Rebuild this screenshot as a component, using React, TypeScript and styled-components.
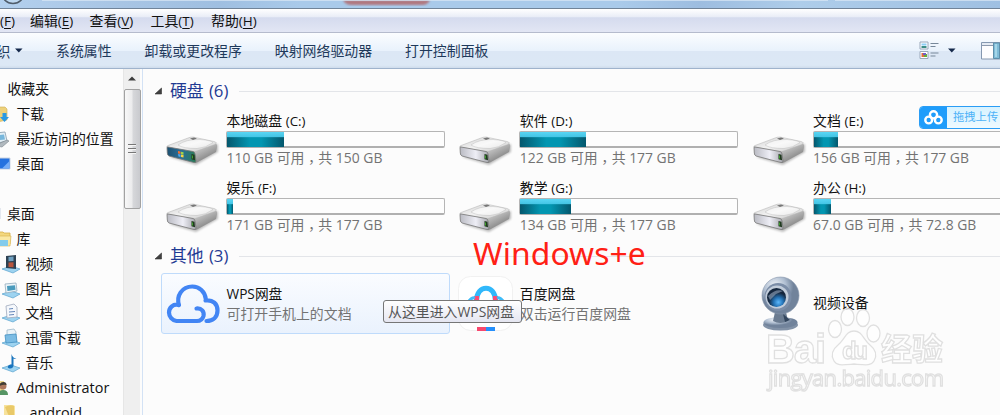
import React from "react";
import styled, { createGlobalStyle } from "styled-components";

const GlobalStyle = createGlobalStyle`
  * { box-sizing: border-box; }
  html, body { margin: 0; padding: 0; overflow: hidden; background: #fcfcfc; }
  body { font-family: "Open Sans", "Noto Sans CJK SC", sans-serif; font-size: 13.9px; color: #111; }
  svg { display: block; flex: none; overflow: visible; }
`;

const Window = styled.div`
  width: 1000px;
  height: 415px;
  display: flex;
  flex-direction: column;
  overflow: hidden;
  position: relative;
  background: #fcfcfc;
`;

const TitleStrip = styled.div`
  height: 9px;
  flex: none;
  overflow: hidden;
  background: linear-gradient(90deg, #b3d0ee 0, #a8c5e4 12%, #9fbfe1 22%, #a9caea 30%, #a9caea 62%, #9dbde0 70%, #aecdea 80%, #9fc0e2 100%);
  border-bottom: 1px solid #718499;
`;

const MenuBar = styled.div`
  height: 24px;
  flex: none;
  display: flex;
  align-items: center;
  gap: 15.5px;
  line-height: 20px;
  padding-top: 1px;
  white-space: nowrap;
  background: linear-gradient(#ffffff 0, #e9edf7 34%, #d5dbee 38%, #e2e6f4 100%);
  border-bottom: 1px solid #b5bbcd;
`;

const MenuItem = styled.span<{ $w: number }>`
  width: ${(p) => p.$w}px;
  u { text-underline-offset: 1.5px; text-decoration-thickness: 1px; }
`;

const Latin = styled.span<{ $size?: number }>`
  font-size: ${(p) => p.$size ?? 13}px;
`;

const Toolbar = styled.div`
  height: 36px;
  flex: none;
  display: flex;
  align-items: center;
  white-space: nowrap;
  color: #1e395b;
  background: linear-gradient(#fbfdff 0, #e9f2fc 50%, #dce7f5 52%, #dce8f5 92%, #cfdceb 100%);
  border-bottom: 1px solid #9fb3cc;
`;

const Organize = styled.div`
  display: flex;
  align-items: center;
  gap: 5px;
  width: 56px;
  margin-left: -3.5px;
`;

const ToolButton = styled.span`
  margin-right: 33px;
  line-height: 20px;
  &:first-of-type { margin-left: 3.5px; }
`;

const ToolIcons = styled.div`
  margin-left: auto;
  margin-right: -1px;
  display: flex;
  align-items: center;
  gap: 9px;
`;

const ToolGap = styled.i`
  width: 7px;
`;

const Content = styled.div`
  flex: 1;
  min-height: 0;
  display: flex;
`;

const Sidebar = styled.div`
  width: 123px;
  flex: none;
  padding-top: 8px;
  overflow: hidden;
`;

const SideRow = styled.div<{ $x: number; $gap?: number }>`
  height: 24.9px;
  display: flex;
  align-items: center;
  gap: ${(p) => p.$gap ?? 5}px;
  margin-left: ${(p) => p.$x - 0.6}px;
  white-space: nowrap;
  line-height: 20px;
`;

const Scrollbar = styled.div`
  width: 17px;
  flex: none;
  background: #efefef;
  border-left: 1px solid #e6e6e6;
  display: flex;
  flex-direction: column;
  align-items: center;
  padding-top: 7px;
`;

const Thumb = styled.div`
  width: 17px;
  height: 120px;
  margin-top: 8px;
  border: 1px solid #a2a2a2;
  border-radius: 2px;
  background: linear-gradient(90deg, #f8f8f8, #ececed 45%, #d6d7da 55%, #c9cace);
  display: flex;
  flex-direction: column;
  align-items: center;
  justify-content: center;
  gap: 2px;
`;

const Grip = styled.i`
  width: 8px;
  height: 2px;
  background: #777;
  border-bottom: 1px solid #f6f6f6;
`;

const Main = styled.div`
  flex: 1;
  min-width: 0;
  margin-left: 2px;
  border-left: 1px solid #d3e2f5;
  padding: 8px 0 0 11px;
`;

const GroupHeader = styled.div`
  height: 28px;
  display: flex;
  align-items: center;
  color: #1f3a93;
  font-size: 16.8px;
  line-height: 28px;
  white-space: nowrap;
`;

const GroupTitle = styled.span`
  width: 69px;
  margin-left: 7px;
  word-spacing: 1px;
`;

const Rule = styled.i`
  flex: 1;
  height: 1px;
  background: #e3e5e9;
`;

const DriveGrid = styled.div`
  display: grid;
  grid-template-columns: repeat(3, 293.3px);
  grid-auto-rows: 67.4px;
  height: 137px;
  padding: 5px 0 0 7px;
`;

const OtherGrid = styled(DriveGrid)`
  grid-auto-rows: 61px;
  height: auto;
  padding-top: 3px;
`;

const DriveTile = styled.div`
  display: flex;
  padding-left: 3px;
`;

const IconCell = styled.div<{ $top: number; $left?: number }>`
  width: 62px;
  flex: none;
  padding-top: ${(p) => p.$top}px;
  padding-left: ${(p) => p.$left ?? 0}px;
`;

const Name = styled.div`
  height: 21px;
  line-height: 21px;
  white-space: nowrap;
  padding-left: 0.5px;
`;

const Detail = styled(Name)`
  height: 20px;
  line-height: 20px;
  color: #737373;
`;

const Comma = styled.span`
  font-family: "Noto Sans CJK TC", sans-serif;
  line-height: 0;
  vertical-align: -4px;
`;

const Bar = styled.div`
  width: 219px;
  height: 17px;
  border: 1px solid #b5b5b5;
  border-bottom: 2px solid #b0b0b0;
  border-radius: 2px;
  background: #fdfdfd;
`;

const Fill = styled.div`
  height: 15px;
  background:
    linear-gradient(rgba(93, 218, 249, 0.95) 0, rgba(73, 202, 234, 0.95) 30%, rgba(0, 150, 180, 0) 38%),
    linear-gradient(90deg, #04576d, #0296b1 40%, #0296b1 60%, #04576d);
`;

const Tile = styled.div<{ $selected?: boolean }>`
  display: flex;
  width: 289px;
  height: 61px;
  padding-left: 2px;
  border: 1px solid ${(p) => (p.$selected ? "#bfdbfb" : "transparent")};
  border-radius: 3px;
  background: ${(p) => (p.$selected ? "linear-gradient(#fafcff, #eaf2fd)" : "none")};
`;

const TileText = styled.div<{ $top: number }>`
  padding-top: ${(p) => p.$top}px;
`;

const Tooltip = styled.div`
  position: absolute;
  left: 383px;
  top: 300px;
  width: 139px;
  height: 23px;
  padding-left: 4px;
  line-height: 21px;
  color: #555;
  white-space: nowrap;
  border: 1px solid #767676;
  border-radius: 3px;
  background: linear-gradient(#fff, #e5e6f1);
`;

const Caption = styled.div`
  position: absolute;
  left: 473px;
  top: 231px;
  font-family: "Noto Sans", sans-serif;
  font-size: 31.8px;
  line-height: 43px;
  letter-spacing: 0.1px;
  color: #ff2015;
  white-space: nowrap;
`;

const UploadBadge = styled.div`
  position: absolute;
  left: 919px;
  top: 106px;
  width: 90px;
  height: 23px;
  display: flex;
  border: 1px solid #2a9df5;
  border-radius: 4px;
  overflow: hidden;
  background: linear-gradient(#d7f2ff, #eefaff);
  color: #4db2f7;
  font-size: 11.3px;
  line-height: 20px;
  white-space: nowrap;
`;

const BadgeIcon = styled.div`
  width: 27px;
  flex: none;
  margin-right: 6px;
  background: #1f9dfb;
  display: flex;
  align-items: center;
  justify-content: center;
`;

const Watermark = styled.div`
  position: absolute;
  left: 760px;
  top: 305px;
  opacity: 0.85;
`;

const Caret = () => (
  <svg width="8" height="5" viewBox="0 0 8 5"><path d="M0 .5h7.5L3.8 4.500z" fill="#15294b" /></svg>
);

const Expander = () => (
  <svg width="9" height="8" viewBox="0 0 9 8"><path d="M7.500 1V7H1z" fill="#404040" stroke="#333" strokeWidth=".6" /></svg>
);

const ViewIcon = () => (
  <svg width="20" height="19" viewBox="0 0 20 19">
    <g fill="#fff" stroke="#9aa8ba"><path d="M1 1h8v7H1zM1 10.500h8v7H1z" /></g>
    <path d="M2.500 2.500h5v2h-5z" fill="#8dcff5" /><path d="M2.500 5h5v2h-5z" fill="#3b8d85" />
    <path d="M2.500 12h2.500v4H2.500z" fill="#e46d3a" /><path d="M5 13h3v3H5z" fill="#66ae39" /><path d="M4 12h3v2H4z" fill="#745dc8" />
    <path d="M11.500 2.500h8M11.500 5.500h5M11.500 12h8M11.500 15h5" stroke="#77889a" strokeWidth="1.200" />
  </svg>
);

const PaneIcon = () => (
  <svg width="20" height="18" viewBox="0 0 20 18">
    <path d="M.5.5h18.500v16.500H.5z" fill="#fdfdfe" stroke="#8598b0" />
    <path d="M1 1h11v3H1z" fill="#e4eaf2" /><path d="M1 3.500h11" stroke="#8d9aae" />
    <path d="M12.500 1h6v15.500h-6z" fill="#7fbcd8" stroke="#5d8fab" /><path d="M14 2h2v13h-2z" fill="#a4d6e9" />
  </svg>
);

const DriveIcon = ({ system }: { system?: boolean }) => (
  <svg width="56" height="32" viewBox="0 0 56 32">
    <defs>
      <linearGradient id="driveTop" x1="0" y1="0" x2="1" y2="1"><stop stopColor="#d0d0d0" /><stop offset=".5" stopColor="#f2f2f2" /><stop offset="1" stopColor="#c4c4c4" /></linearGradient>
      <linearGradient id="driveSide" x1="0" y1="0" x2=".6" y2="1"><stop stopColor="#e3e3e3" /><stop offset="1" stopColor="#757575" /></linearGradient>
      <linearGradient id="driveFace"><stop stopColor="#b9bac2" /><stop offset=".55" stopColor="#eeeef6" /><stop offset="1" stopColor="#a5a6ac" /></linearGradient>
      <linearGradient id="driveSys"><stop stopColor="#1d5070" /><stop offset=".5" stopColor="#2b6f98" /><stop offset="1" stopColor="#2a7c53" /></linearGradient>
      <filter id="driveShadow" x="-20%" y="-20%" width="140%" height="150%"><feGaussianBlur stdDeviation="1" /></filter>
    </defs>
    <path d="M5 22 32 30 54 17V9z" fill="#000" opacity=".25" filter="url(#driveShadow)" />
    <path d="M30 16 52 8.500Q53.500 9.500 53 12L52 17 33 27.500Q31 28.500 30 27z" fill="url(#driveSide)" />
    <path d="M3 12Q2 11.500 4 10.500L24 3Q26 2 29 2L50 6.500Q54 7.500 51 9.500L33 16Q31 17 28 16.500z" fill="url(#driveTop)" stroke="#b0b0b0" strokeWidth=".5" />
    <path d="M14 10Q22 4 36 4.500 48 5.500 49 7.500 42 13 33 13.500 19 13.500 14 10" fill="#fff" opacity=".55" stroke="#9d9d9d" strokeWidth=".5" />
    <path d="m26 3.500 4-1 3 1-4 1.500z" fill="#777" />
    <path d="M3 12.500Q2.500 12 4 12L29 16.500Q31 17 31 19L32 26Q32 28 30 27.500L5 21Q3.500 20.500 3.300 18z" fill={system ? "url(#driveSys)" : "url(#driveFace)"} stroke="#777" strokeWidth=".8" />
    <path d="m27.500 19 3 .7.500 5.500-3.500-1z" fill="#20391f" /><path d="M28.500 20.500v3" stroke="#49bd33" strokeWidth=".8" />
    {system && <g><path d="m14 16 2.500.5v2.500L14 18.500z" fill="#ef7133" /><path d="m17 16.700 2.500.5v2.500L17 19z" fill="#9fd54a" /><path d="m14 19 2.500.5V22l-2-.5z" fill="#52a8ed" /><path d="m17 19.600 2.500.5v2.500L17 22z" fill="#fbd53c" /></g>}
  </svg>
);

const WpsIcon = () => (
  <svg width="54" height="40" viewBox="0 0 54 40">
    <path d="M30.500 24.500c5-.5 8 3 7 7.500-.8 3-3.500 5-6.500 5H10.500A8.700 8.700 0 0 1 3 28.500c0-5 4-8.200 8.500-7.800l1.500.5C10 12 16 2.500 26.300 2.500c7 0 12.700 5 13.500 12.500M40.500 37c6.500 0 11-4 11-10.500C51.500 20 47 15.500 39.500 16.500" fill="none" stroke="#4285f4" strokeWidth="4.200" strokeLinecap="round" strokeLinejoin="round" />
  </svg>
);

const NetdiskIcon = () => (
  <svg width="56" height="56" viewBox="0 0 56 56">
    <rect x=".5" y=".5" width="54" height="54" rx="12" fill="#fff" stroke="#f1f1f1" />
    <path d="M18.500 25C18.500 8 37.500 8 37.500 25" fill="none" stroke="#31b8fb" strokeWidth="5" />
    <path d="M18.500 20v5M37.500 20v5" stroke="#fb4b75" strokeWidth="5" />
    <path d="M11 25q3-4 6-3M45 25q-3-4-6-3" fill="none" stroke="#3fbcf9" strokeWidth="3" />
    <path d="M19 51h9v4h-9z" fill="#f8486e" /><path d="M28 51h9v4h-9z" fill="#258ffb" />
  </svg>
);

const WebcamIcon = () => (
  <svg width="42" height="56" viewBox="0 0 42 56">
    <defs>
      <radialGradient id="camBody" cx=".35" cy=".25"><stop stopColor="#f3f6fa" /><stop offset=".6" stopColor="#aebdd0" /><stop offset="1" stopColor="#71839b" /></radialGradient>
      <radialGradient id="camLens" cx=".6" cy=".75"><stop stopColor="#5bb7fb" /><stop offset=".5" stopColor="#2372b5" /><stop offset="1" stopColor="#14263d" /></radialGradient>
    </defs>
    <ellipse cx="20.500" cy="50" rx="17.500" ry="5.500" fill="#8292a7" /><ellipse cx="20.500" cy="47.500" rx="17" ry="5.500" fill="url(#camBody)" />
    <path d="M15 37h11l2 9q-8 4-15 0z" fill="#6b7c91" /><path d="m23 39 7 6-5 2z" fill="#33465e" />
    <circle cx="20.500" cy="20.500" r="18.500" fill="url(#camBody)" stroke="#8796ab" strokeWidth=".6" />
    <ellipse cx="18" cy="22" rx="13.500" ry="14" fill="#7b8da7" /><circle cx="17" cy="22" r="11.500" fill="#c1ccda" />
    <circle cx="16.500" cy="22.500" r="9.500" fill="url(#camLens)" /><path d="M8 21q8-8 15-5l-7 3-6 6z" fill="#a4b7cd" opacity=".55" />
  </svg>
);

const CloudKnotIcon = () => (
  <svg width="19" height="15" viewBox="0 0 19 15" fill="none" stroke="#fff" strokeWidth="2.400">
    <circle cx="9.500" cy="4.800" r="3.600" /><circle cx="4.700" cy="10" r="3.400" /><circle cx="14.300" cy="10" r="3.400" />
  </svg>
);

type SideKind = "star" | "down" | "recent" | "desk" | "lib" | "video" | "image" | "doc" | "xl" | "music" | "user" | "folder";

const Tray = () => <path d="m0 14 9-3 9 3-7 4z" fill="#9dd3f0" stroke="#5aa3cf" strokeWidth=".7" />;

const SideIcon = ({ kind }: { kind: SideKind }) => (
  <svg width="18" height="18" viewBox="0 0 18 18">
    {kind === "star" && <path d="m8 2 3 5 5 1-4 4 1 5-5-3z" fill="#f8d375" />}
    {kind === "down" && <g><path d="M5 2h8l2 2v11l-10 2z" fill="#edd17b" stroke="#cfad52" strokeWidth=".6" /><path d="M10.500 8h4v4h2.500l-4.500 5-4.500-5h2.500z" fill="#2899e5" /></g>}
    {kind === "recent" && <g><path d="M4 3l9-1 2 9-9 2z" fill="#e2eef5" stroke="#9dafbd" /><path d="m7 5 5-.5 1 5-5 .5z" fill="#78b7dc" /><path d="m6 14 9-4 2 1-7 6-5-1z" fill="#b1b9bf" stroke="#78838a" strokeWidth=".6" /></g>}
    {kind === "desk" && <g><path d="M1 3h17v11H1z" fill="#2672df" stroke="#cbd4e2" /><path d="M10 13.500 17.500 6v7.500z" fill="#76adf8" /></g>}
    {kind === "lib" && <g><path d="M4 2h6l1 1h6v11H3z" fill="#f3d77d" stroke="#d6ae49" strokeWidth=".8" /><path d="M5 6h13l-1 10H6z" fill="#fae8a3" stroke="#d6ae49" strokeWidth=".6" /><path d="M7 10h8v6H7z" fill="#82cbec" /></g>}
    {kind === "video" && <g><Tray /><path d="m4 1 10-1v14l-10-1z" fill="#2e4253" /><path d="m6.500 2 5-.5v4.500l-5 .3z" fill="#6fa1c2" /><path d="m6.500 7.500 5-.3v5l-5-.2z" fill="#b8563e" /></g>}
    {kind === "image" && <g><Tray /><path d="m3 4 11-1 1 8-11 2z" fill="#edf5f9" stroke="#92abbc" strokeWidth=".8" /><path d="m5 6 8-.8.5 4.500-8 1.300z" fill="#4a9bbd" /></g>}
    {kind === "doc" && <g><Tray /><path d="m4 2 8-2 3 3v10l-10 1z" fill="#f5f8fc" stroke="#a0aabc" strokeWidth=".8" /><path d="m7 5 4-.5M7 8l6-.5M7 11l5-.5" stroke="#6486b9" /></g>}
    {kind === "xl" && <g><Tray /><path d="m5 1 7-1 2 3v6H5z" fill="#eaf3f8" stroke="#91afc3" strokeWidth=".7" /><path d="m3 6 11-1 1 8-11 1z" fill="#7bbce4" stroke="#438fc0" strokeWidth=".8" /></g>}
    {kind === "music" && <g><Tray /><path d="M9.500 0q1 4 5 5-2 0-3-.5V12q-1 3-4 2.500-3-1-1-3 1.500-1.500 3-1z" fill="#1974bd" /></g>}
    {kind === "user" && <g><path d="M4 2h9v13H4z" fill="#edda8d" /><circle cx="12" cy="7" r="3.500" fill="#ad785d" /><path d="M8.500 7q0-4 4-4 3 0 3 3-3-1-7 1" fill="#413d34" /><path d="M7 16q0-5 5-5 5 0 5 5z" fill="#569564" /></g>}
    {kind === "folder" && <g><path d="M2 1h9l2 1v15H2z" fill="#f7e29b" /><path d="M3 3q5-3 9-1v15H9z" fill="#e9c969" /></g>}
  </svg>
);

const sideRows: ({ kind: SideKind; text: string; x: number; gap?: number; size?: number } | null)[] = [
  { kind: "star", text: "收藏夹", x: -15 },
  { kind: "down", text: "下载", x: -7, gap: 6 },
  { kind: "recent", text: "最近访问的位置", x: -7, gap: 6 },
  { kind: "desk", text: "桌面", x: -7, gap: 6 },
  null,
  { kind: "desk", text: "桌面", x: -17, gap: 6.5 },
  { kind: "lib", text: "库", x: -6 },
  { kind: "video", text: "视频", x: 3 },
  { kind: "image", text: "图片", x: 3 },
  { kind: "doc", text: "文档", x: 3 },
  { kind: "xl", text: "迅雷下载", x: 3 },
  { kind: "music", text: "音乐", x: 3 },
  { kind: "user", text: "Administrator", x: -8, gap: 7, size: 14.4 },
  { kind: "folder", text: "android", x: 3, gap: 9, size: 14.4 },
];

const drives = [
  { name: "本地磁盘", letter: "(C:)", free: "110 GB", total: "150 GB", fill: 57, system: true },
  { name: "软件", letter: "(D:)", free: "122 GB", total: "177 GB", fill: 66 },
  { name: "文档", letter: "(E:)", free: "156 GB", total: "177 GB", fill: 24.5 },
  { name: "娱乐", letter: "(F:)", free: "171 GB", total: "177 GB", fill: 6 },
  { name: "教学", letter: "(G:)", free: "134 GB", total: "177 GB", fill: 51 },
  { name: "办公", letter: "(H:)", free: "67.0 GB", total: "72.8 GB", fill: 17 },
];

const menus = [
  { name: "", key: "F", w: 14.5 },
  { name: "编辑", key: "E", w: 44 },
  { name: "查看", key: "V", w: 45.5 },
  { name: "工具", key: "T", w: 45 },
  { name: "帮助", key: "H", w: 48 },
];

export default function App() {
  return (
    <Window>
      <GlobalStyle />
      <TitleStrip>
        <svg width="1000" height="8" viewBox="0 0 1000 8">
          <defs><filter id="soft"><feGaussianBlur stdDeviation="1.200" /></filter></defs>
          <circle cx="13" cy="-8" r="11.500" fill="#bdd7ef" stroke="#505d6b" strokeWidth="1.500" />
          <path d="M343 0h87q-2 5-8 5h-70q-7 0-9-5z" fill="#b07880" filter="url(#soft)" />
          <path d="M42 0h786M835 0h165" stroke="#dce9f6" strokeWidth="2" opacity=".7" />
        </svg>
      </TitleStrip>
      <MenuBar>
        {menus.map((m) => (
          <MenuItem key={m.key} $w={m.w}>{m.name}<Latin $size={13.5}>(<u>{m.key}</u>)</Latin></MenuItem>
        ))}
      </MenuBar>
      <Toolbar>
        <Organize>织<Caret /></Organize>
        <ToolButton>系统属性</ToolButton>
        <ToolButton>卸载或更改程序</ToolButton>
        <ToolButton>映射网络驱动器</ToolButton>
        <ToolButton>打开控制面板</ToolButton>
        <ToolIcons><ViewIcon /><Caret /><ToolGap /><PaneIcon /></ToolIcons>
      </Toolbar>
      <Content>
        <Sidebar>
          {sideRows.map((r, i) => (
            <SideRow key={i} $x={r?.x ?? 0} $gap={r?.gap}>
              {r && <><SideIcon kind={r.kind} /><Latin $size={r.size ?? 13.9}>{r.text}</Latin></>}
            </SideRow>
          ))}
        </Sidebar>
        <Scrollbar>
          <svg width="8" height="5" viewBox="0 0 8 5"><path d="M0 4.500h8L4 .5z" fill="#3c3c3c" /></svg>
          <Thumb><Grip /><Grip /><Grip /></Thumb>
        </Scrollbar>
        <Main>
          <GroupHeader><Expander /><GroupTitle>硬盘 (6)</GroupTitle><Rule /></GroupHeader>
          <DriveGrid>
            {drives.map((d) => (
              <DriveTile key={d.letter}>
                <IconCell $top={25}><DriveIcon system={d.system} /></IconCell>
                <div>
                  <Name>{d.name} <Latin $size={13.4}>{d.letter}</Latin></Name>
                  <Bar><Fill style={{ width: d.fill }} /></Bar>
                  <Detail><Latin $size={13.9}>{d.free} </Latin>可用<Comma>，</Comma>共<Latin $size={13.9}> {d.total}</Latin></Detail>
                </div>
              </DriveTile>
            ))}
          </DriveGrid>
          <GroupHeader><Expander /><GroupTitle>其他 (3)</GroupTitle><Rule /></GroupHeader>
          <OtherGrid>
            <Tile $selected>
              <IconCell $top={10} $left={2}><WpsIcon /></IconCell>
              <TileText $top={9}><Name><Latin $size={13.7}>WPS网盘</Latin></Name><Detail>可打开手机上的文档</Detail></TileText>
            </Tile>
            <Tile>
              <IconCell $top={2} $left={1}><NetdiskIcon /></IconCell>
              <TileText $top={9}><Name>百度网盘</Name><Detail>双击运行百度网盘</Detail></TileText>
            </Tile>
            <Tile>
              <IconCell $top={1} $left={9}><WebcamIcon /></IconCell>
              <TileText $top={18}><Name>视频设备</Name></TileText>
            </Tile>
          </OtherGrid>
        </Main>
      </Content>
      <UploadBadge><BadgeIcon><CloudKnotIcon /></BadgeIcon>拖拽上传</UploadBadge>
      <Caption>Windows+e</Caption>
      <Tooltip>从这里进入WPS网盘</Tooltip>
      <Watermark>
        <svg width="195" height="95" viewBox="0 0 195 95" fill="#fff" stroke="#dcdcdc" strokeWidth="1.300" fontFamily="'Liberation Sans', 'Noto Sans CJK SC', sans-serif">
          <text x="6" y="58" fontSize="40" fontWeight="700" textLength="60">Bai</text>
          <ellipse cx="75" cy="24" rx="6.500" ry="8.500" /><ellipse cx="87.500" cy="12" rx="6.500" ry="8.500" />
          <ellipse cx="103" cy="13" rx="6.500" ry="8.500" /><ellipse cx="113.500" cy="28.500" rx="6.500" ry="8.500" />
          <path d="M94 26c-8 0-9 8-16 14-5 4-8 9-4 16 3 5 8 4 20 3 12 1 17 2 20-3 4-7 1-12-4-16-7-6-8-14-16-14z" />
          <text x="82" y="54" fontSize="24" fontWeight="700" textLength="26">du</text>
          <text x="121" y="55" fontSize="31" fontWeight="700" textLength="62">经验</text>
          <text x="8" y="81" fontSize="22" textLength="176" fontFamily="'Open Sans', sans-serif">jingyan.baidu.com</text>
        </svg>
      </Watermark>
    </Window>
  );
}
